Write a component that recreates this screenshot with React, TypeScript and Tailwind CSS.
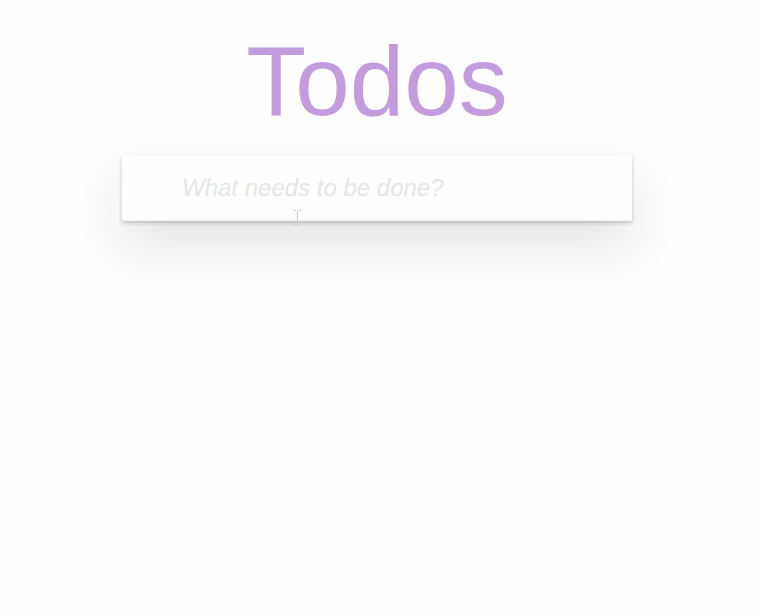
import React from "react";

export default function App() {
  return (
    <div className="relative min-h-[614px] w-full bg-[#fefefe] font-['Liberation_Sans',Arial,sans-serif]">
      <div className="flex flex-col items-center pr-[7px]">
        <h1 className="mt-[31px] text-center text-[98px] font-thin leading-[100px] text-[#c39cde]">
          Todos
        </h1>
        <div className="mt-[24px] w-[510px] bg-white shadow-[0_2px_4px_0_rgba(0,0,0,0.2),0_25px_50px_0_rgba(0,0,0,0.1)]">
          <input
            className="block w-full bg-[rgba(0,0,0,0.003)] py-4 pl-[60px] pr-4 text-[24px] leading-[1.4em] text-[#4d4d4d] shadow-[inset_0_-2px_1px_rgba(0,0,0,0.03)] outline-none placeholder:italic placeholder:text-[#e6e6e6]"
            placeholder="What needs to be done?"
          />
        </div>
      </div>
      <svg className="absolute left-[292px] top-[209px]" width="11" height="18" viewBox="0 0 11 18">
        <path d="M2 1.5h2.5l1 1 1-1H9M5.5 2.5v13M2 16.5h2.5l1-1 1 1H9" stroke="#cfcfcf" strokeWidth="1" fill="none" />
      </svg>
    </div>
  );
}
